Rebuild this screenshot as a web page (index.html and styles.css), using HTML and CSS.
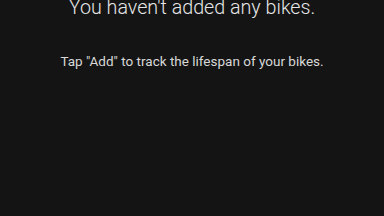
FILE: index.html
```html
<!DOCTYPE html>
<html lang="en">
<head>
  <meta charset="UTF-8">
  <title>Bikes</title>
  <link rel="stylesheet" href="styles.css">
</head>
<body>
  <div class="empty">
    <h2 class="empty-title">You haven't added any bikes.</h2>
    <p class="empty-hint">Tap "Add" to track the lifespan of your bikes.</p>
  </div>
</body>
</html>
```

FILE: styles.css
```css
html, body {
  margin: 0;
  height: 100%;
  background: #141414;
}

body {
  font-family: Roboto, "Noto Sans", sans-serif;
  overflow: hidden;
}

.empty {
  text-align: center;
  margin-top: -6px;
}

.empty-title {
  margin: 0;
  font-size: 19.7px;
  font-weight: 300;
  line-height: 28px;
  color: #e6e6e6;
}

.empty-hint {
  margin: 30px 0 0;
  font-size: 13.5px;
  line-height: 18px;
  font-weight: 400;
  color: #d8d8d8;
}
```
